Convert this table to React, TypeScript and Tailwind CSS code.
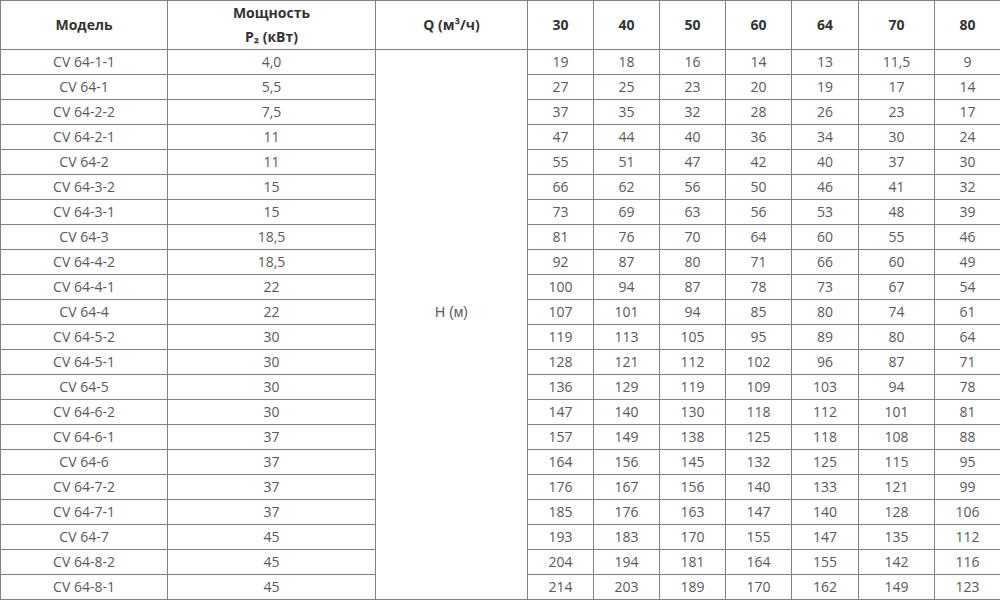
const heads = ["30", "40", "50", "60", "64", "70", "80"];

const rows: [string, string, string[]][] = [
  ["CV 64-1-1", "4,0", ["19", "18", "16", "14", "13", "11,5", "9"]],
  ["CV 64-1", "5,5", ["27", "25", "23", "20", "19", "17", "14"]],
  ["CV 64-2-2", "7,5", ["37", "35", "32", "28", "26", "23", "17"]],
  ["CV 64-2-1", "11", ["47", "44", "40", "36", "34", "30", "24"]],
  ["CV 64-2", "11", ["55", "51", "47", "42", "40", "37", "30"]],
  ["CV 64-3-2", "15", ["66", "62", "56", "50", "46", "41", "32"]],
  ["CV 64-3-1", "15", ["73", "69", "63", "56", "53", "48", "39"]],
  ["CV 64-3", "18,5", ["81", "76", "70", "64", "60", "55", "46"]],
  ["CV 64-4-2", "18,5", ["92", "87", "80", "71", "66", "60", "49"]],
  ["CV 64-4-1", "22", ["100", "94", "87", "78", "73", "67", "54"]],
  ["CV 64-4", "22", ["107", "101", "94", "85", "80", "74", "61"]],
  ["CV 64-5-2", "30", ["119", "113", "105", "95", "89", "80", "64"]],
  ["CV 64-5-1", "30", ["128", "121", "112", "102", "96", "87", "71"]],
  ["CV 64-5", "30", ["136", "129", "119", "109", "103", "94", "78"]],
  ["CV 64-6-2", "30", ["147", "140", "130", "118", "112", "101", "81"]],
  ["CV 64-6-1", "37", ["157", "149", "138", "125", "118", "108", "88"]],
  ["CV 64-6", "37", ["164", "156", "145", "132", "125", "115", "95"]],
  ["CV 64-7-2", "37", ["176", "167", "156", "140", "133", "121", "99"]],
  ["CV 64-7-1", "37", ["185", "176", "163", "147", "140", "128", "106"]],
  ["CV 64-7", "45", ["193", "183", "170", "155", "147", "135", "112"]],
  ["CV 64-8-2", "45", ["204", "194", "181", "164", "155", "142", "116"]],
  ["CV 64-8-1", "45", ["214", "203", "189", "170", "162", "149", "123"]],
];

const widths = [167, 208, 152, 66, 66, 66, 66, 67, 76, 66];

export default function App() {
  return (
    <div className="w-[1000px] h-[600px] bg-white overflow-hidden font-['Open_Sans',sans-serif] text-[14px]">
      <table className="w-[1000px] table-fixed border-collapse">
        <colgroup>
          {widths.map((w, i) => (
            <col key={i} style={{ width: w }} />
          ))}
        </colgroup>
        <thead>
          <tr className="text-[#333] font-bold">
            <th className="border border-[#808080] p-0 leading-6 align-middle">Модель</th>
            <th className="border border-[#808080] p-0 leading-6 align-middle">
              Мощность
              <br />
              P₂ (кВт)
            </th>
            <th className="border border-[#808080] p-0 leading-6 align-middle">Q (м³/ч)</th>
            {heads.map((h) => (
              <th key={h} className="border border-[#808080] p-0 leading-6 align-middle">
                {h}
              </th>
            ))}
          </tr>
        </thead>
        <tbody className="text-[#595959]">
          {rows.map(([model, power, vals], i) => (
            <tr key={model}>
              <td className="border border-[#808080] p-0 leading-6 text-center">{model}</td>
              <td className="border border-[#808080] p-0 leading-6 text-center">{power}</td>
              {i === 0 && (
                <td
                  rowSpan={rows.length}
                  className="border border-[#808080] p-0 pb-[25px] leading-6 text-center align-middle font-['Liberation_Sans',sans-serif] text-[#5a5a5a]"
                >
                  H (м)
                </td>
              )}
              {vals.map((v, j) => (
                <td key={j} className="border border-[#808080] p-0 leading-6 text-center">
                  {v}
                </td>
              ))}
            </tr>
          ))}
        </tbody>
      </table>
    </div>
  );
}
